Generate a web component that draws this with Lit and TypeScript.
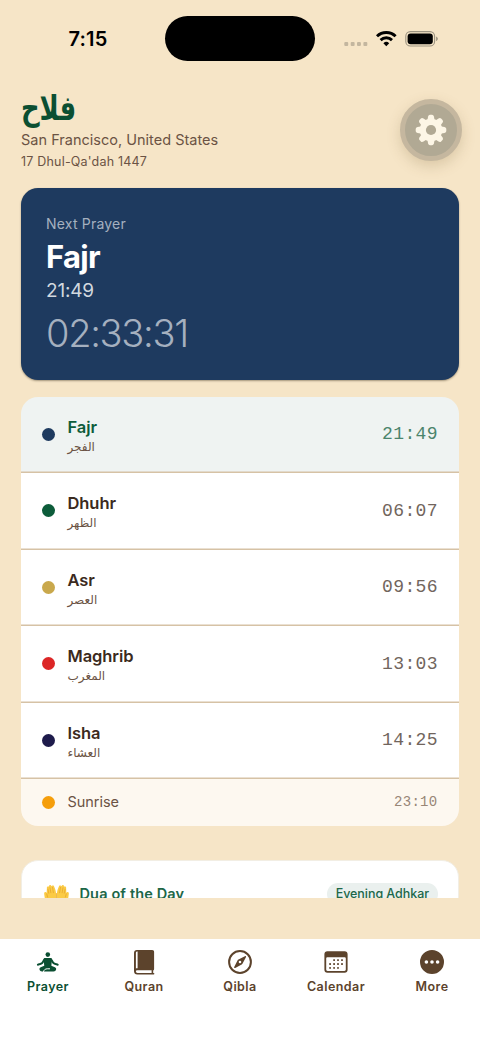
import { LitElement, html, svg, css } from "lit";
import { customElement, property } from "lit/decorators.js";
import { classMap } from "lit/directives/class-map.js";

interface Prayer {
  name: string;
  arabic: string;
  time: string;
  color: string;
}

const PRAYERS: Prayer[] = [
  { name: "Fajr", arabic: "الفجر", time: "21:49", color: "#1e3a5f" },
  { name: "Dhuhr", arabic: "الظهر", time: "06:07", color: "#0d5c3a" },
  { name: "Asr", arabic: "العصر", time: "09:56", color: "#c9a84c" },
  { name: "Maghrib", arabic: "المغرب", time: "13:03", color: "#dc2626" },
  { name: "Isha", arabic: "العشاء", time: "14:25", color: "#1e1b4b" },
];

const ICONS: Record<string, unknown> = {
  Prayer: svg`<circle cx="11.800" cy="4.600" r="2.300"/>
    <path d="M9.300 8h5c1.100 0 1.700.5 1.700 1.500l-.7 6.700H8.300l-.7-6.700C7.600 8.500 8.200 8 9.300 8z"/>
    <path d="M9 9.100c-1.200.5-1.700 3-3 4-1.100.8-2.700 1.200-4.100 1.600M14.600 9.100c1.200.5 1.700 3 3 4 1.100.8 2.700 1.200 4.100 1.600" fill="none" stroke="currentColor" stroke-width="2" stroke-linecap="round"/>
    <path d="M8.300 15.700h7l3.600 1.500c1.100.5 1.400 1.200 1.200 2.200-.3 1.300-1.200 2-2.500 2H6c-1.300 0-2.200-.7-2.500-2-.2-1 .1-1.700 1.200-2.200z"/>
    <path d="M7.400 21.800c.5-2 1.800-2.900 3.800-3h2.400" fill="none" stroke="#fff" stroke-width="1" stroke-linecap="round"/>`,
  Quran: svg`<path fill-rule="evenodd" d="M4.900 0h15.300c1.200 0 1.900.7 1.900 1.900v17c0 .8-.3 1.300-.9 1.600v2.500h.4c.5 0 .8.300.8.700s-.3.800-.8.800H5.300C3.300 24.500 2 23.200 2 21.200V2.900C2 1 3.100 0 4.900 0zM4.800 1.600c-.6.100-.9.500-.9 1.200v15.600c.3-.2.600-.2 1-.2h.7V1.600zM5.600 20.300c-1.100 0-1.700.5-1.700 1.300 0 .9.600 1.400 1.700 1.400h14v-2.700z"/>`,
  Qibla: svg`<circle cx="12" cy="12" r="10.900" fill="none" stroke="currentColor" stroke-width="2"/>
    <path fill-rule="evenodd" d="M17.800 6.200c.3.300.3.600.1 1l-3.300 6.300c-.2.400-.5.800-.9 1l-6.500 3.400c-.4.200-.7.200-.9-.1-.3-.2-.3-.5-.1-.9l3.300-6.500c.2-.4.600-.7 1-.9l6.400-3.300c.4-.2.700-.2.900 0zM12 10.700a1.300 1.300 0 100 2.600 1.300 1.300 0 000-2.600z"/>`,
  Calendar: svg`<path fill-rule="evenodd" d="M3.400 1.200h17.200c1.900 0 3 1.100 3 3v15.500c0 1.900-1.100 3-3 3H3.400c-1.900 0-3-1.100-3-3V4.200c0-1.900 1.100-3 3-3zM3.600 7.200c-.9 0-1.400.5-1.400 1.400v10.900c0 .9.500 1.400 1.400 1.400h16.800c.9 0 1.400-.5 1.400-1.400V8.600c0-.9-.5-1.400-1.400-1.400z"/>
    ${[[10.1, 10.1], [14, 10.1], [18, 10.1], [6.1, 14], [10.1, 14], [14, 14], [18, 14], [6.1, 17.9], [10.1, 17.9], [14, 17.9]].map(
      ([x, y]) => svg`<rect x=${x - 0.9} y=${y - 0.9} width="1.800" height="1.800" rx=".4"/>`
    )}`,
  More: svg`<path fill-rule="evenodd" d="M12 0a12 12 0 100 24 12 12 0 000-24zM6.400 10.200a1.800 1.800 0 110 3.600 1.800 1.800 0 010-3.600zM12 10.200a1.800 1.800 0 110 3.600 1.800 1.800 0 010-3.600zM17.600 10.200a1.800 1.800 0 110 3.600 1.800 1.800 0 010-3.600z"/>`,
};

@customElement("status-bar")
class StatusBar extends LitElement {
  static styles = css`
    :host { display: flex; height: 78px; align-items: center; padding: 0 42px 0 68.500px; }
    .clock { width: 96.500px; font-size: 20px; font-weight: 600; letter-spacing: 0.150px; line-height: 24px; }
    .island { width: 150px; height: 44.500px; border-radius: 23px; background: #000; margin-top: -1px; }
    .signals { display: block; margin-left: auto; }
  `;
  render() {
    return html`
      <div class="clock">7:15</div>
      <div class="island"></div>
      <svg class="signals" width="96" height="20" viewBox="342 29 96 20">
        <g fill="#c3b69f">
          ${[346.2, 352.6, 358.9, 365.3].map((x) => svg`<rect x=${x - 1.9} y="42.100" width="3.900" height="3.900" rx="1"/>`)}
        </g>
        <g fill="none" stroke="#000" stroke-width="2.900">
          <path d="M377 36.300a13.300 13.300 0 0118.600 0"/>
          <path d="M380.600 40.100a8.200 8.200 0 0111.400 0"/>
        </g>
        <path d="M386.300 46.200l-2.900-3a4.200 4.200 0 015.800 0z"/>
        <rect x="405.800" y="31.600" width="28.800" height="14.400" rx="4.600" fill="none" stroke="#9c9380" stroke-width="1.100"/>
        <rect x="407.600" y="33.400" width="25.200" height="10.800" rx="3"/>
        <path d="M436.100 36.500c2.300.9 2.300 3.700 0 4.600z" fill="#9c9380"/>
      </svg>
    `;
  }
}

@customElement("prayer-row")
class PrayerRow extends LitElement {
  @property({ attribute: false }) prayer!: Prayer;
  @property({ type: Boolean }) current = false;

  static styles = css`
    :host { display: block; }
    .row { display: flex; align-items: center; box-sizing: border-box; height: 76.500px; padding: 0 21.500px 1px 21px; background: #fff; box-shadow: inset 0 -1.500px #d6c2a5; }
    .dot { width: 13px; height: 13px; border-radius: 50%; margin-right: 12.500px; }
    .names { flex: 1; display: flex; flex-direction: column; align-items: flex-start; padding-top: 4px; }
    .name { font-size: 16.500px; line-height: 22px; font-weight: 600; color: #3b2a20; letter-spacing: -0.080px; }
    .arabic { font: 12px/19px "DejaVu Sans", sans-serif; color: #6b5344; }
    .time { font: 18px/22px "Liberation Mono", monospace; color: #71655d; letter-spacing: 0.350px; margin-right: -0.350px; }
    .current { background: #eff3f2; }
    .current .name { color: #0d5c3a; }
    .current .time { color: #4b846c; }
  `;
  render() {
    const p = this.prayer;
    return html`
      <div class=${classMap({ row: true, current: this.current })}>
        <span class="dot" style="background:${p.color}"></span>
        <div class="names">
          <span class="name">${p.name}</span>
          <span class="arabic" lang="ar" dir="rtl">${p.arabic}</span>
        </div>
        <span class="time">${p.time}</span>
      </div>
    `;
  }
}

@customElement("tab-bar")
class TabBar extends LitElement {
  static styles = css`
    :host { display: grid; grid-template-columns: repeat(5, 1fr); flex: none; height: 105px; background: #fff; color: #5c432c; }
    .tab { display: flex; flex-direction: column; align-items: center; padding-top: 11px; }
    .icon { display: block; width: 24px; height: 24px; fill: currentColor; overflow: visible; }
    .label { font-size: 12.500px; line-height: 18px; margin-top: 4px; font-weight: 600; letter-spacing: 0.450px; }
    .active { color: #0b4f32; }
  `;
  render() {
    return Object.keys(ICONS).map(
      (name) => html`
        <div class=${classMap({ tab: true, active: name === "Prayer" })}>
          <svg class="icon" viewBox="0 0 24 24">${ICONS[name]}</svg>
          <span class="label">${name}</span>
        </div>
      `
    );
  }
}

@customElement("app-root")
class AppRoot extends LitElement {
  static styles = css`
    :host { display: flex; flex-direction: column; width: 480px; height: 1044px; overflow: hidden; background: #f6e5c7; font-family: Inter, sans-serif; color: #000; }
    .content { height: 820px; overflow: hidden; padding: 0 21px; box-sizing: border-box; }
    .header { display: flex; justify-content: space-between; height: 109.500px; }
    .brand { display: flex; flex-direction: column; align-items: flex-start; padding-top: 10px; }
    .title { font: bold 34px/40px "DejaVu Sans", sans-serif; color: #0b4f32; height: 42px; transform: scaleX(0.76); transform-origin: left; }
    .place { font-size: 14.500px; line-height: 20px; color: #6b5344; letter-spacing: 0.010px; }
    .date { font-size: 12.500px; line-height: 18px; margin-top: 3px; color: #6b5344; letter-spacing: 0.200px; }
    .settings { display: flex; align-items: center; justify-content: center; box-sizing: border-box; width: 62px; height: 62px; margin: 21px -3px 0 0; border-radius: 50%; background: #b1a994; border: 5px solid #c5b79f; box-shadow: 0 5px 14px rgba(120, 95, 50, 0.22); }
    .next { box-sizing: border-box; height: 192.500px; border-radius: 17px; background: #1e3a5f; padding: 26px 25px 0; color: #fff; box-shadow: 0 1px 2px rgba(40, 30, 10, 0.4); display: flex; flex-direction: column; }
    .caption { font-size: 14px; line-height: 20px; color: #a5b0bf; letter-spacing: 0.200px; }
    .prayer { font-size: 31px; line-height: 38px; margin-top: 4.500px; font-weight: 700; letter-spacing: -0.700px; }
    .at { font-size: 19px; line-height: 24px; margin-top: 2.500px; color: #d2d8df; letter-spacing: -0.200px; }
    .countdown { font-size: 38px; line-height: 46px; margin-top: 7.500px; font-weight: 300; color: #a5b0bf; letter-spacing: -1.300px; }
    .list { margin-top: 16.500px; border-radius: 17px; overflow: hidden; }
    .sunrise { display: flex; align-items: center; height: 46.500px; padding: 0 21.500px 0 21px; background: #fdf8f0; }
    .dot { width: 13px; height: 13px; border-radius: 50%; margin-right: 12.500px; background: #f59e0b; }
    .label { flex: 1; font-size: 14.500px; line-height: 20px; color: #6b5344; letter-spacing: -0.050px; }
    .time { font: 14px/20px "Liberation Mono", monospace; color: #988676; letter-spacing: 0.300px; }
    .dua { display: flex; align-items: flex-start; box-sizing: border-box; height: 120px; margin-top: 34px; border-radius: 17px; background: #fff; border: 1px solid #f2eee4; padding: 22px 20.500px 0 21px; }
    .hands { display: block; width: 25px; height: 24px; margin: 1px 10.500px 0 1px; }
    .heading { flex: 1; font-size: 14.500px; line-height: 22px; font-weight: 600; color: #1d6747; letter-spacing: 0.140px; }
    .pill { font-size: 12.500px; line-height: 22px; padding: 0 8.500px; border-radius: 11px; background: #eaf0ee; color: #1d6747; font-weight: 450; letter-spacing: -0.050px; }
    .gap { flex: 1; }
  `;
  render() {
    const hand = svg`
      <path fill="#fbcb45" d="M12.600 24V10.500C12.600 7 11.500 4 10.300 1.500 9.600.2 8.300.6 8.500 2L7.300 1C6.500 0 5.200.5 5.300 1.800L4.600 2.100C3.600 1.700 2.800 2.500 3 3.700L2.800 8.500 2 8C.8 7.500 0 8.500.2 9.900L1.200 17 5 24z"/>
      <path d="M6.200 3l1 6M8.800 2.500l1 6.500M4 4.500l1 5M2.800 9.500l1 4" fill="none" stroke="#e5a52c" stroke-width=".8"/>`;
    return html`
      <status-bar></status-bar>
      <div class="content">
        <div class="header">
          <div class="brand">
            <div class="title" lang="ar" dir="rtl">فلاح</div>
            <div class="place">San Francisco, United States</div>
            <div class="date">17 Dhul-Qa'dah 1447</div>
          </div>
          <div class="settings">
            <svg width="32" height="32" viewBox="-16 -16 32 32">
              <g fill="#fdf6e6">
                ${[0, 45, 90, 135].map((a) => svg`<path transform="rotate(${a})" d="M-3.800 -9L-2.900 -13.500Q-2.500 -15.300 -1 -15.300H1Q2.500 -15.300 2.900 -13.500L3.800 -9V9L2.900 13.500Q2.500 15.300 1 15.300H-1Q-2.500 15.300 -2.900 13.500L-3.800 9Z"/>`)}
                <circle r="11.300"/>
              </g>
              <circle r="5.100" fill="#b1a994"/>
            </svg>
          </div>
        </div>
        <div class="next">
          <div class="caption">Next Prayer</div>
          <div class="prayer">Fajr</div>
          <div class="at">21:49</div>
          <div class="countdown">02:33:31</div>
        </div>
        <div class="list">
          ${PRAYERS.map((p, i) => html`<prayer-row .prayer=${p} ?current=${i === 0}></prayer-row>`)}
          <div class="sunrise">
            <span class="dot"></span>
            <span class="label">Sunrise</span>
            <span class="time">23:10</span>
          </div>
        </div>
        <div class="dua">
          <svg class="hands" viewBox="0 0 26 24">
            <g>${hand}</g>
            <g transform="matrix(-1 0 0 1 26 0)">${hand}</g>
            <path d="M13 9v15" stroke="#e5a52c" stroke-width=".8"/>
          </svg>
          <span class="heading">Dua of the Day</span>
          <span class="pill">Evening Adhkar</span>
        </div>
      </div>
      <div class="gap"></div>
      <tab-bar></tab-bar>
    `;
  }
}
